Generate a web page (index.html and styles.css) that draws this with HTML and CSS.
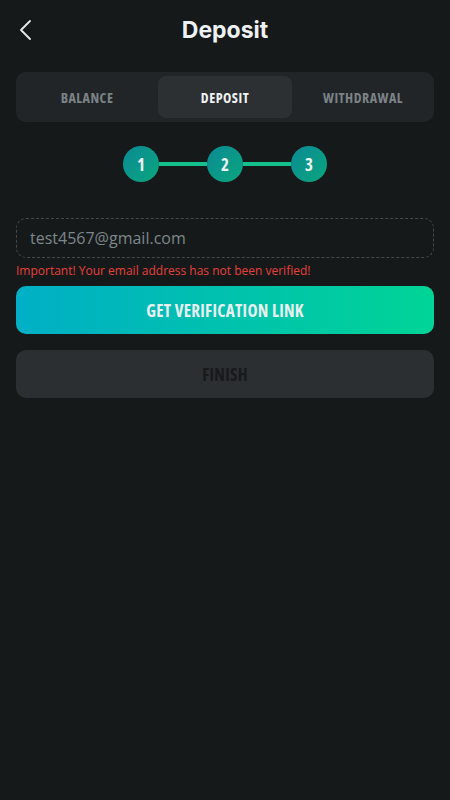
FILE: index.html
```html
<!DOCTYPE html>
<html lang="en">
<head>
    <meta charset="UTF-8">
    <meta name="viewport" content="width=device-width, initial-scale=1.0">
    <title>Deposit</title>
    <link rel="stylesheet" href="styles.css">
</head>
<body>
    <header class="header">
        <button class="back" type="button" aria-label="Back">
            <svg width="14" height="22" viewBox="0 0 14 22">
                <path d="M12 2 L3 11 L12 20" fill="none" stroke="#e6eaec" stroke-width="1.8" stroke-linecap="round" stroke-linejoin="round"/>
            </svg>
        </button>
        <h1>Deposit</h1>
    </header>

    <nav class="tabs">
        <div class="tab">BALANCE</div>
        <div class="tab active">DEPOSIT</div>
        <div class="tab">WITHDRAWAL</div>
    </nav>

    <div class="steps">
        <div class="step">1</div>
        <div class="line"></div>
        <div class="step">2</div>
        <div class="line"></div>
        <div class="step">3</div>
    </div>

    <form class="form">
        <input class="email" type="email" value="test4567@gmail.com">
        <span class="error">Important! Your email address has not been verified!</span>
        <button type="button" class="btn primary">GET VERIFICATION LINK</button>
        <button type="button" class="btn disabled">FINISH</button>
    </form>
</body>
</html>
```

FILE: styles.css
```css
body {
    margin: 0;
    background: #16191a;
    font-family: "Open Sans", sans-serif;
    color: #e6eaec;
    padding: 0 16px;
}
.header {
    display: flex;
    align-items: center;
    justify-content: center;
    height: 60px;
    position: relative;
}
.back {
    position: absolute;
    left: 2px;
    top: 19px;
    background: none;
    border: none;
    padding: 0;
}
.header h1 {
    margin: 0;
    font-family: Inter, sans-serif;
    font-size: 23px;
    font-weight: 700;
    color: #eef1f3;
}
.tabs {
    margin-top: 12px;
    display: grid;
    grid-template-columns: 1fr 1fr 1fr;
    gap: 4px;
    padding: 4px;
    background: #222527;
    border-radius: 10px;
    height: 42px;
}
.tab {
    display: flex;
    align-items: center;
    justify-content: center;
    border-radius: 8px;
    font-size: 14px;
    font-weight: 700;
    font-stretch: 75%;
    letter-spacing: 0.5px;
    color: #7b8387;
}
.tab.active {
    background: #2d3032;
    color: #f2f4f5;
}
.steps {
    display: flex;
    align-items: center;
    justify-content: center;
    margin-top: 24px;
}
.step {
    width: 36px;
    height: 36px;
    border-radius: 50%;
    background: linear-gradient(135deg, #0b8a94, #0aa67e);
    display: flex;
    align-items: center;
    justify-content: center;
    font-size: 17px;
    font-weight: 700;
    font-stretch: 75%;
    color: #eef2f2;
}
.line {
    width: 48px;
    height: 4px;
    background: #14c08c;
}
.form {
    margin-top: 36px;
    display: flex;
    flex-direction: column;
}
.email {
    height: 40px;
    box-sizing: border-box;
    border: 1px dashed #44494c;
    border-radius: 10px;
    background: transparent;
    padding: 0 13px;
    font-family: "Open Sans", sans-serif;
    font-size: 16px;
    color: #7d878b;
    outline: none;
}
.error {
    margin-top: 4px;
    font-size: 12px;
    color: #e8413a;
}
.btn {
    height: 48px;
    border: none;
    border-radius: 10px;
    font-family: "Open Sans", sans-serif;
    font-size: 17px;
    font-weight: 700;
    font-stretch: 75%;
    letter-spacing: 0.3px;
}
.primary {
    margin-top: 7px;
    background: linear-gradient(90deg, #00afc6, #00d496);
    color: #e9eff0;
}
.disabled {
    margin-top: 16px;
    background: #2c2f31;
    color: #17191a;
}
```
